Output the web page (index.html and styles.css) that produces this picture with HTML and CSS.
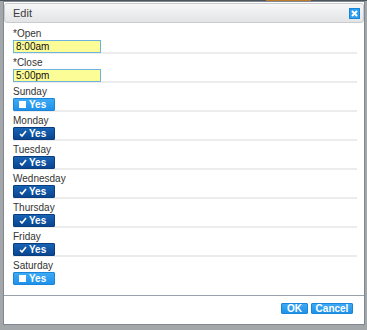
FILE: index.html
```html
<!DOCTYPE html>
<html>
	<head>
		<meta charset="UTF-8">
		<title>Edit</title>
		<link rel="stylesheet" href="styles.css">
	</head>
	<body>
		<div class="topstrip"><span class="tab"></span></div>
		<div class="dialog">
			<div class="titlebar">
				<span class="title">Edit</span>
				<a class="close" href="#">
					<svg width="7" height="7" viewBox="0 0 7 7"><path d="M1 1L6 6M6 1L1 6" stroke="#fff" stroke-width="2"/></svg>
				</a>
			</div>
			<div class="content">
				<div class="row">
					<label>*Open</label>
					<input class="time" type="text" value="8:00am">
				</div>
				<div class="row">
					<label>*Close</label>
					<input class="time" type="text" value="5:00pm">
				</div>
				<div class="row">
					<label>Sunday</label>
					<span class="toggle"><i class="box"></i>Yes</span>
				</div>
				<div class="row">
					<label>Monday</label>
					<span class="toggle on"><svg class="tick" width="8" height="7" viewBox="0 0 8 7"><path d="M1 4L3 6L7 1" stroke="#fff" stroke-width="1.6" fill="none"/></svg>Yes</span>
				</div>
				<div class="row">
					<label>Tuesday</label>
					<span class="toggle on"><svg class="tick" width="8" height="7" viewBox="0 0 8 7"><path d="M1 4L3 6L7 1" stroke="#fff" stroke-width="1.6" fill="none"/></svg>Yes</span>
				</div>
				<div class="row">
					<label>Wednesday</label>
					<span class="toggle on"><svg class="tick" width="8" height="7" viewBox="0 0 8 7"><path d="M1 4L3 6L7 1" stroke="#fff" stroke-width="1.6" fill="none"/></svg>Yes</span>
				</div>
				<div class="row">
					<label>Thursday</label>
					<span class="toggle on"><svg class="tick" width="8" height="7" viewBox="0 0 8 7"><path d="M1 4L3 6L7 1" stroke="#fff" stroke-width="1.6" fill="none"/></svg>Yes</span>
				</div>
				<div class="row">
					<label>Friday</label>
					<span class="toggle on"><svg class="tick" width="8" height="7" viewBox="0 0 8 7"><path d="M1 4L3 6L7 1" stroke="#fff" stroke-width="1.6" fill="none"/></svg>Yes</span>
				</div>
				<div class="row last">
					<label>Saturday</label>
					<span class="toggle"><i class="box"></i>Yes</span>
				</div>
			</div>
			<div class="footer">
				<a class="btn ok" href="#">OK</a>
				<a class="btn cancel" href="#">Cancel</a>
			</div>
		</div>
	</body>
</html>
```

FILE: styles.css
```css
*{
	margin: 0;
	padding: 0;
	box-sizing: border-box;
}
body{
	width: 367px;
	height: 330px;
	background: #a4a7aa;
	font-family: "Liberation Sans", Arial, sans-serif;
	overflow: hidden;
}
.topstrip{
	height: 1px;
	background: #4c535b;
	padding-left: 266px;
}
.topstrip .tab{
	display: block;
	width: 45px;
	height: 1px;
	background: #c07a2c;
}
.dialog{
	margin-left: 3px;
	width: 362px;
	height: 324px;
	background: #fff;
	border: 1px solid #7f8891;
	padding-top: 1px;
	display: flex;
	flex-direction: column;
}
.titlebar{
	height: 20px;
	border: 1px solid #c9cbce;
	border-radius: 3px;
	background: linear-gradient(#f7f7f7, #e3e4e6);
	display: flex;
	align-items: center;
	justify-content: space-between;
	padding: 0 3px 0 8px;
}
.title{
	font-size: 11px;
	color: #3c3c3c;
}
.close{
	width: 11px;
	height: 11px;
	background: #2d9ef0;
	border: 1px solid #1a86d8;
	display: flex;
	align-items: center;
	justify-content: center;
}
.content{
	flex: 1;
	padding: 2px 7px 0 9px;
}
.row{
	height: 29px;
	padding-top: 3px;
	border-bottom: 2px solid #ececec;
	display: flex;
	flex-direction: column;
	align-items: flex-start;
}
.row.last{
	border-bottom: none;
}
.row label{
	font-size: 10px;
	line-height: 11px;
	color: #333;
	margin-bottom: 1px;
}
.time{
	width: 88px;
	height: 13px;
	border: 1px solid #6db4dc;
	background: #fdfd98;
	font-family: "Liberation Sans", Arial, sans-serif;
	font-size: 10px;
	color: #111;
	padding: 0 2px;
	outline: none;
}
.toggle{
	width: 42px;
	height: 13px;
	display: flex;
	align-items: center;
	padding-left: 5px;
	font-size: 10px;
	font-weight: bold;
	color: #fff;
	background: linear-gradient(#3eaaf6, #1f91ea);
	border: 1px solid #1b86d8;
	border-radius: 1px;
}
.toggle.on{
	background: linear-gradient(#1863b5, #0a4590);
	border-color: #0a3d7e;
}
.box{
	display: block;
	width: 7px;
	height: 7px;
	background: #fff;
	margin-right: 3px;
}
.tick{
	margin-right: 2px;
}
.footer{
	height: 29px;
	border-top: 1px solid #9aa3ad;
	display: flex;
	justify-content: flex-end;
	align-items: flex-start;
	gap: 3px;
	padding: 7px 11px 0 0;
}
.btn{
	height: 11px;
	display: flex;
	align-items: center;
	justify-content: center;
	font-size: 10px;
	font-weight: bold;
	color: #fff;
	text-decoration: none;
	background: linear-gradient(#3eaaf6, #1f91ea);
	border: 1px solid #1b86d8;
	border-radius: 1px;
}
.ok{
	width: 27px;
}
.cancel{
	width: 42px;
}
```
